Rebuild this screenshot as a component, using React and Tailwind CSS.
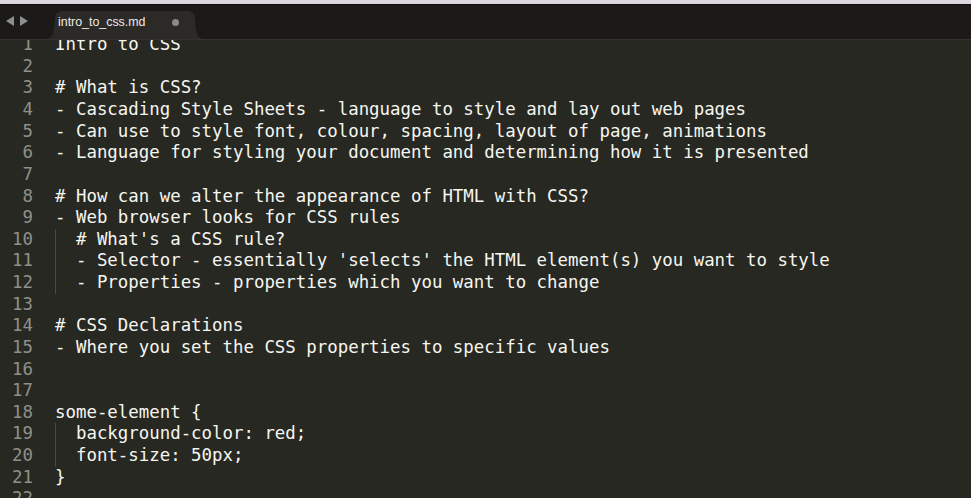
import React from "react";

const lines = [
  "Intro to CSS",
  "",
  "# What is CSS?",
  "- Cascading Style Sheets - language to style and lay out web pages",
  "- Can use to style font, colour, spacing, layout of page, animations",
  "- Language for styling your document and determining how it is presented",
  "",
  "# How can we alter the appearance of HTML with CSS?",
  "- Web browser looks for CSS rules",
  "  # What's a CSS rule?",
  "  - Selector - essentially 'selects' the HTML element(s) you want to style",
  "  - Properties - properties which you want to change",
  "",
  "# CSS Declarations",
  "- Where you set the CSS properties to specific values",
  "",
  "",
  "some-element {",
  "  background-color: red;",
  "  font-size: 50px;",
  "}",
  "",
];

const CodeLine = ({ num, text }) => {
  const indented = text.startsWith("  ");
  return (
    <div className="flex h-[21.63px] items-center whitespace-pre">
      <span className="w-[33px] text-right text-[#8f908a]">{num}</span>
      <span className="pl-[22px] text-[#f6f6f0]">
        {indented ?
          <>
            <span className="inline-block w-[2ch] h-[22px] align-middle border-l border-[#4a4a44]" />
            {text.slice(2)}
          </>
        : text}
      </span>
    </div>
  );
};

export default function App() {
  return (
    <div className="w-[971px] h-[498px] overflow-hidden flex flex-col bg-[#272822]">
      <div className="h-[5px] bg-[#dcd6df] border-b border-[#0f0e0d]" />
      <div className="h-[35px] bg-[#1b1a18] flex items-end border-b border-[#33322e] relative z-10">
        <div className="w-[45px] h-full flex items-center gap-[6px] pl-[6px] pb-[2px]">
          <svg width="8" height="10" viewBox="0 0 8 10">
            <path d="M8 0 L0 5 L8 10 Z" fill="#8e8e8e" />
          </svg>
          <svg width="8" height="10" viewBox="0 0 8 10">
            <path d="M0 0 L8 5 L0 10 Z" fill="#8e8e8e" />
          </svg>
        </div>
        <div className="relative w-[160px] h-[28px]">
          <svg className="absolute inset-0" width="160" height="28" viewBox="0 0 160 28">
            <path
              d="M0 28 C6 28 8 25 9 19 L10 7 C11 2 13 0 18 0 L142 0 C147 0 149 2 150 7 L151 19 C152 25 154 28 160 28 Z"
              fill="#2b2a26"
            />
          </svg>
          <div className="relative flex items-center h-full pl-[13px] pr-[14px] pb-[5px]">
            <span className="text-[12.4px] text-[#ececec] font-['Liberation_Sans',sans-serif]">
              intro_to_css.md
            </span>
            <span className="ml-auto w-[7px] h-[7px] rounded-full bg-[#8a8a86] mr-[12px]" />
          </div>
        </div>
      </div>
      <div className="flex-1 overflow-hidden">
        <div className="-mt-[6.6px] font-['DejaVu_Sans_Mono',monospace] text-[17.4px]">
          {lines.map((t, i) => (
            <CodeLine key={i} num={i + 1} text={t} />
          ))}
        </div>
      </div>
    </div>
  );
}
